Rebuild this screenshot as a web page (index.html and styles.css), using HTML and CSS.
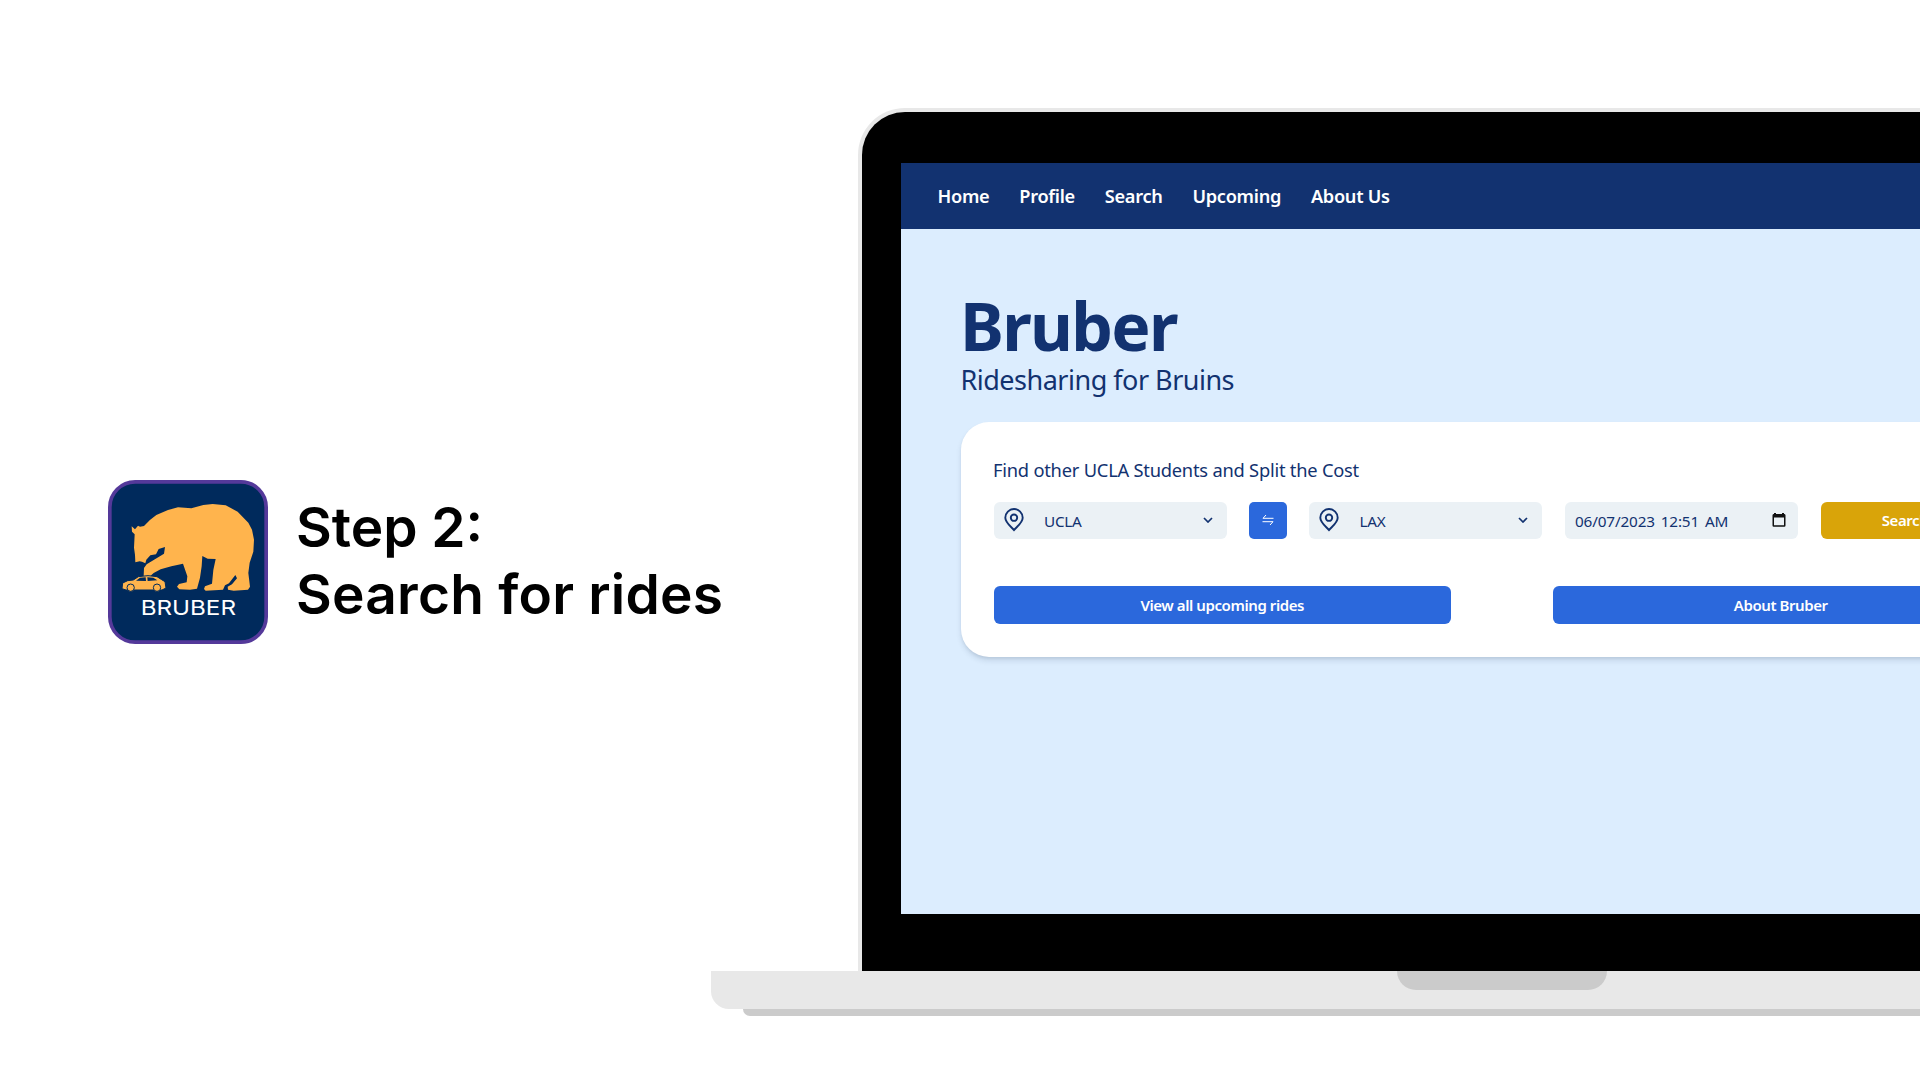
FILE: index.html
```html
<!DOCTYPE html>
<html lang="en">
<head>
<meta charset="utf-8">
<title>Bruber – Step 2</title>
<link rel="stylesheet" href="styles.css">
</head>
<body>
<main class="slide">
  <section class="intro">
    <svg class="logo" viewBox="54 60 480 492" role="img" aria-label="Bruber">
      <rect x="59.500" y="65.500" width="469" height="481" rx="76" fill="#002a5c" stroke="#54399a" stroke-width="11"/>
      <path fill="#ffb44d" d="M125 199L135 208L144 197L150 200L162 198Q176 181 199 165L234 150L264 142L304 145L340 135L368 132L407 136L443 155L475 188L486 209L492 239L490 275L479 308L475 339L480 380L474 389L431 392L414 389L413 380L426 373L441 355L436 345L417 370L405 376L399 389L347 392L342 387L345 379L366 371L370 330L377 297L353 296L337 288L335 319L330 353L321 386L300 389L268 388L261 380L267 372L290 367L292 349L279 311L244 319L212 328L191 339L181 348H161L162 324L170 313L222 281L225 261L206 267L198 283L181 286L169 299L166 310L156 305L149 304L136 307L135 285L132 263L134 223L126 215Z"/>
      <path fill="#ffb44d" stroke="#002a5c" stroke-width="3" d="M96 386L98 369L113 362L130 360L145 350Q175 344 201 350L215 359L225 365L228 384L216 390H108Z"/>
      <path fill="#002a5c" d="M138 362L150 353L167 352L168 363ZM172 352L190 353L202 361L173 363Z"/>
      <g fill="#ffb44d" stroke="#002a5c" stroke-width="3"><circle cx="122" cy="383" r="11"/><circle cx="201" cy="383" r="11"/></g>
      <text class="logo-name" x="152" y="464" textLength="286" lengthAdjust="spacingAndGlyphs">BRUBER</text>
    </svg>
    <h1 class="headline"><span>Step 2:</span><br><span class="wide">Search for rides</span></h1>
  </section>

  <section class="laptop">
    <div class="lid">
      <div class="screen">
        <nav class="nav">
          <a>Home</a><a>Profile</a><a>Search</a><a>Upcoming</a><a>About Us</a>
        </nav>
        <div class="page">
          <h2 class="brand">Bruber</h2>
          <p class="tagline">Ridesharing for Bruins</p>
          <div class="card">
            <p class="prompt">Find other UCLA Students and Split the Cost</p>
            <div class="row">
              <div class="field">
                <svg class="pin" viewBox="0 0 20 24"><path d="M10 22C7 18.600 1.300 14.500 1.300 9.700a8.700 8.700 0 0 1 17.400 0C18.700 14.500 13 18.600 10 22Z"/><circle cx="10" cy="9.700" r="3.200"/></svg>
                <span class="place">UCLA</span>
                <svg class="chevron" viewBox="0 0 10 6"><path d="M1 1l4 4 4-4"/></svg>
              </div>
              <button class="swap" aria-label="Swap"><svg viewBox="0 0 12 12"><path d="M4 1L1 4.300H11.500M.5 7.700H11L8 11"/></svg></button>
              <div class="field">
                <svg class="pin" viewBox="0 0 20 24"><path d="M10 22C7 18.600 1.300 14.500 1.300 9.700a8.700 8.700 0 0 1 17.400 0C18.700 14.500 13 18.600 10 22Z"/><circle cx="10" cy="9.700" r="3.200"/></svg>
                <span class="place lax">LAX</span>
                <svg class="chevron" viewBox="0 0 10 6"><path d="M1 1l4 4 4-4"/></svg>
              </div>
              <div class="field date">
                <span class="when">06/07/2023 12:51 AM</span>
                <svg class="calendar" viewBox="0 0 14 14"><path fill-rule="evenodd" d="M2 1V0H4V1H10V0H12V1H12.500A1.200 1.200 0 0 1 13.500 2.200V12.500A1.200 1.200 0 0 1 12.300 13.700H1.700A1.200 1.200 0 0 1 .5 12.500V2.200A1.200 1.200 0 0 1 1.500 1ZM2 4.500V12.300H12V4.500Z"/></svg>
              </div>
              <button class="button search">Search</button>
            </div>
            <div class="row links">
              <button class="button">View all upcoming rides</button>
              <button class="button">About Bruber</button>
            </div>
          </div>
        </div>
      </div>
    </div>
    <div class="base"><div class="notch"></div></div>
    <div class="foot"></div>
  </section>
</main>
</body>
</html>
```
FILE: styles.css
```css
* { box-sizing: border-box; }
body { margin: 0; background: #fff; font-family: "Noto Sans", sans-serif; }
h1, h2, p { margin: 0; }
button { border: 0; padding: 0; font: inherit; }

.slide { display: flex; width: 1920px; height: 1080px; overflow: hidden; }
.intro { display: flex; align-items: flex-start; flex: none; width: 711px; padding: 480px 0 0 108px; }
.logo { flex: none; width: 160px; height: 164px; }
.logo-name { font-family: Inter, sans-serif; font-size: 61px; font-weight: 400; fill: #fff; }
.headline { padding: 14px 0 0 28px; font-family: Inter, sans-serif; font-size: 55px; font-weight: 600; line-height: 67px; white-space: nowrap; color: #000; }
.wide { letter-spacing: .22px; }

.laptop { flex: none; width: 1582px; padding-top: 108px; }
.lid { height: 862.5px; margin: 0 147px; padding: 50.5px 39px 56px; background: #000; border: 4px solid #e8e8e8; border-bottom: 0; border-radius: 47px 47px 0 0; }
.screen { height: 751.5px; background: #dcedfe; overflow: hidden; }
.base { display: flex; justify-content: center; height: 38.5px; background: #e8e8e8; border-radius: 0 0 18px 18px; }
.notch { width: 210px; height: 19.5px; background: #cbcbcb; border-radius: 0 0 19px 19px; }
.foot { height: 7px; margin: 0 32px; background: #cbcbcb; border-radius: 0 0 7px 7px; }

.nav { display: flex; align-items: center; gap: 29.8px; height: 66px; padding: 1px 36.5px 0; background: #123270; color: #fff; font-size: 18.2px; font-weight: 600; letter-spacing: -.28px; }
.page { padding: 58px 60px 0; color: #123270; }
.brand { margin-left: -1px; font-size: 66px; font-weight: 700; line-height: 76px; letter-spacing: -1.7px; }
.tagline { margin-left: -.5px; font-size: 27px; line-height: 34px; font-weight: 400; letter-spacing: -.5px; }
.card { width: 1081px; height: 235px; margin-top: 25px; padding: 33px; background: #fff; border-radius: 28px; box-shadow: 0 4px 6px -1px rgba(20, 40, 70, .14), 0 2px 4px -2px rgba(20, 40, 70, .14); }
.prompt { margin-left: -1px; font-size: 18.3px; line-height: 29px; letter-spacing: -.22px; }
.row { display: flex; gap: 22px; margin-top: 18px; }
.field { display: flex; align-items: center; width: 233px; height: 37.5px; padding: 0 14px 0 10px; background: #ebf1f5; border-radius: 6px; font-size: 15.3px; }
.place, .when { padding-top: 2px; }
.place { letter-spacing: -.25px; }
.lax { margin-left: .5px; }
.when { letter-spacing: -.15px; word-spacing: 2px; }
.date, .search { margin-left: 1px; }
.pin { width: 20px; height: 24px; margin-right: 20px; fill: none; stroke: #123270; stroke-width: 1.9; }
.chevron { width: 10px; height: 6px; margin-left: auto; fill: none; stroke: #123270; stroke-width: 1.7; }
.swap { display: grid; place-items: center; width: 38px; height: 37.5px; background: #2b68dc; border-radius: 5px; }
.swap svg { width: 12px; height: 12px; fill: none; stroke: #fff; stroke-width: 1; }
.calendar { width: 14px; height: 14px; margin: 0 -2px 0 auto; fill: #111; }
.button { width: 457px; height: 37.5px; background: #2b68dc; color: #fff; border-radius: 6px; font-size: 15px; font-weight: 600; letter-spacing: -.42px; }
.search { width: 168px; background: #d9a409; }
.links { gap: 102px; margin-top: 47px; }
```
